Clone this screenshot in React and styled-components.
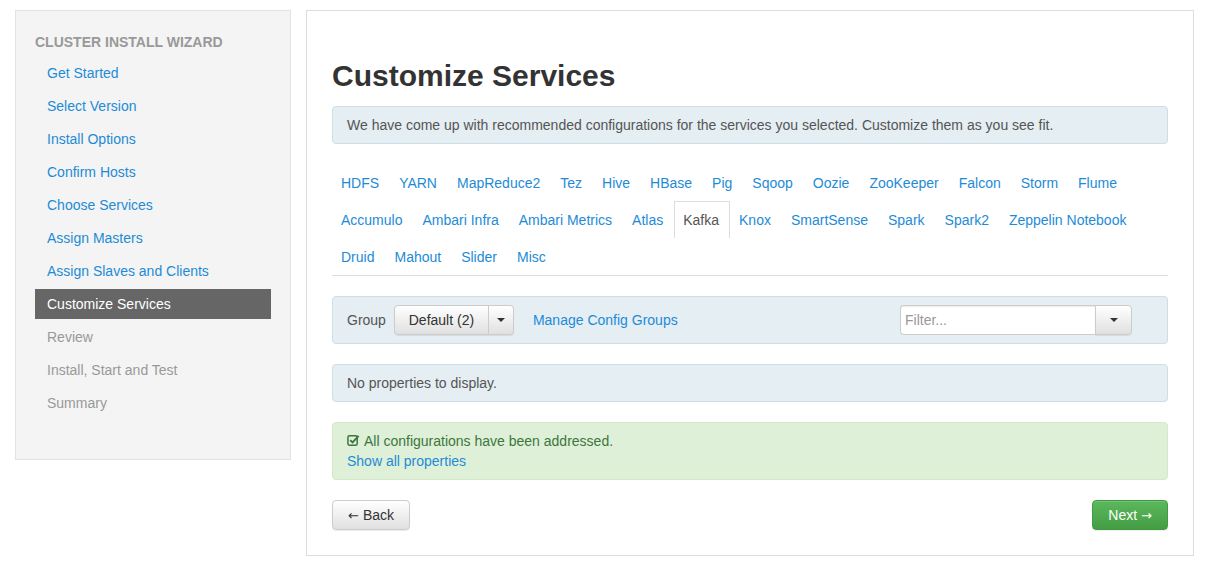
import React from 'react'
import styled, { createGlobalStyle, css } from 'styled-components'

const GlobalStyle = createGlobalStyle`
	body {
		margin: 0;
		background: #fff;
		font-family: 'Liberation Sans', Arial, sans-serif;
		font-size: 14px;
		color: #333;
	}
	* {
		box-sizing: border-box;
	}
`

const LINK = '#1e8bd6'

const Page = styled.div`
	display: grid;
	grid-template-columns: 276px 888px;
	column-gap: 15px;
	align-items: start;
	padding: 10px 0 0 15px;
`

const Sidebar = styled.div`
	background: #f4f4f4;
	border: 1px solid #e3e3e3;
	padding: 21px 19px 38px 19px;
`

const SidebarTitle = styled.div`
	font-size: 14px;
	font-weight: bold;
	color: #999;
	line-height: 20px;
	text-transform: uppercase;
	margin-bottom: 6px;
`

const NavItem = styled.div`
	padding: 5px 12px;
	line-height: 20px;
	margin-bottom: 3px;
	color: ${LINK};
	${(p) =>
		p.$active &&
		css`
			background: #666;
			color: #fff;
		`}
	${(p) =>
		p.$disabled &&
		css`
			color: #999;
		`}
`

const Main = styled.div`
	border: 1px solid #ddd;
	padding: 48px 25px 25px 25px;
`

const Heading = styled.h2`
	font-size: 30px;
	font-weight: bold;
	line-height: 33px;
	margin: 0 0 14px 0;
	color: #333;
`

const Box = styled.div`
	background: ${(p) => (p.$success ? '#dff0d8' : '#e4eef3')};
	border: 1px solid ${(p) => (p.$success ? '#d6e9c6' : '#cfdde6')};
	border-radius: 4px;
	color: ${(p) => (p.$success ? '#3c763d' : '#555')};
	padding: 8px 14px;
	line-height: 20px;
	margin-bottom: 20px;
`

const Tabs = styled.div`
	display: flex;
	flex-wrap: wrap;
	border-bottom: 1px solid #ddd;
	margin-top: 20px;
	margin-bottom: 20px;
`

const Tab = styled.div`
	padding: 8px 10px 8px 8px;
	line-height: 20px;
	border: 1px solid transparent;
	border-bottom: none;
	color: ${LINK};
	${(p) =>
		p.$active &&
		css`
			border-color: #ddd;
			background: #fff;
			color: #555;
		`}
`

const RowBreak = styled.div`
	flex-basis: 100%;
`

const GroupBar = styled.div`
	display: flex;
	align-items: center;
	background: #e4eef3;
	border: 1px solid #cfdde6;
	border-radius: 4px;
	padding: 8px 35px 8px 14px;
	margin-bottom: 20px;
	color: #555;
`

const GroupLabel = styled.span`
	margin-right: 8px;
`

const BtnGroup = styled.div`
	display: flex;
	height: 30px;
`

const gradBtn = css`
	background: linear-gradient(to bottom, #fff 0%, #e0e0e0 100%);
	border: 1px solid #ccc;
	color: #333;
	font-family: inherit;
	font-size: 14px;
	display: flex;
	align-items: center;
	justify-content: center;
	box-shadow: inset 0 1px 0 rgba(255, 255, 255, 0.15), 0 1px 1px rgba(0, 0, 0, 0.075);
`

const SplitMain = styled.div`
	${gradBtn};
	width: 95px;
	border-radius: 4px 0 0 4px;
`

const Caret = styled.div`
	${gradBtn};
	width: ${(p) => p.$w || 25}px;
	border-radius: 0 4px 4px 0;
	border-left: ${(p) => (p.$noLeft ? 'none' : '1px solid #ccc')};
	&::after {
		content: '';
		border-left: 4px solid transparent;
		border-right: 4px solid transparent;
		border-top: 4px solid #333;
	}
`

const GroupLink = styled.span`
	color: ${LINK};
	margin-left: 19px;
`

const Spacer = styled.div`
	flex: 1;
`

const FilterInput = styled.div`
	width: 195px;
	height: 30px;
	border: 1px solid #ccc;
	border-right: none;
	border-radius: 4px 0 0 4px;
	background: #fff;
	color: #999;
	padding: 0 4px;
	display: flex;
	align-items: center;
	box-shadow: inset 0 1px 1px rgba(0, 0, 0, 0.075);
`

const Link = styled.div`
	color: ${LINK};
`

const Footer = styled.div`
	display: flex;
	justify-content: space-between;
`

const Button = styled.div`
	${gradBtn};
	height: 30px;
	padding: 0 15px;
	border-radius: 4px;
	${(p) =>
		p.$green &&
		css`
			background: linear-gradient(to bottom, #5cb85c 0%, #449d44 100%);
			border-color: #409a40;
			color: #fff;
		`}
`

const Arrow = styled.span`
	font-family: 'DejaVu Sans', sans-serif;
	font-size: 13px;
	margin: ${(p) => (p.$right ? '0 0 0 4px' : '0 4px 0 0')};
`

const CheckIcon = () => (
	<svg width='13' height='13' viewBox='0 0 14 14' style={{ marginRight: 4, verticalAlign: '-1px' }}>
		<rect x='1' y='2' width='10' height='10' rx='1.5' fill='none' stroke='#3c763d' strokeWidth='1.6' />
		<path d='M3.5 6.5 L6 9 L12.5 2' fill='none' stroke='#3c763d' strokeWidth='2' />
	</svg>
)

const steps = [
	'Get Started',
	'Select Version',
	'Install Options',
	'Confirm Hosts',
	'Choose Services',
	'Assign Masters',
	'Assign Slaves and Clients',
	'Customize Services',
	'Review',
	'Install, Start and Test',
	'Summary',
]

const services = [
	'HDFS', 'YARN', 'MapReduce2', 'Tez', 'Hive', 'HBase', 'Pig', 'Sqoop', 'Oozie', 'ZooKeeper',
	'Falcon', 'Storm', 'Flume', 'Accumulo', 'Ambari Infra', 'Ambari Metrics', 'Atlas', 'Kafka',
	'Knox', 'SmartSense', 'Spark', 'Spark2', 'Zeppelin Notebook', 'Druid', 'Mahout', 'Slider', 'Misc',
]

const rowBreaks = { Accumulo: true, Druid: true }

const App = () => {
	const current = 7
	return (
		<>
			<GlobalStyle />
			<Page>
				<Sidebar>
					<SidebarTitle>Cluster Install Wizard</SidebarTitle>
					{steps.map((s, i) => (
						<NavItem key={s} $active={i === current} $disabled={i > current}>
							{s}
						</NavItem>
					))}
				</Sidebar>
				<Main>
					<Heading>Customize Services</Heading>
					<Box>
						We have come up with recommended configurations for the services you selected. Customize them as you see fit.
					</Box>
					<Tabs>
						{services.map((s) => (
							<React.Fragment key={s}>
								{rowBreaks[s] && <RowBreak />}
								<Tab $active={s === 'Kafka'}>{s}</Tab>
							</React.Fragment>
						))}
					</Tabs>
					<GroupBar>
						<GroupLabel>Group</GroupLabel>
						<BtnGroup>
							<SplitMain>Default (2)</SplitMain>
							<Caret $noLeft />
						</BtnGroup>
						<GroupLink>Manage Config Groups</GroupLink>
						<Spacer />
						<BtnGroup>
							<FilterInput>Filter...</FilterInput>
							<Caret $w={37} />
						</BtnGroup>
					</GroupBar>
					<Box>No properties to display.</Box>
					<Box $success>
						<div>
							<CheckIcon />
							All configurations have been addressed.
						</div>
						<Link>Show all properties</Link>
					</Box>
					<Footer>
						<Button>
							<Arrow>←</Arrow>Back
						</Button>
						<Button $green>
							Next<Arrow $right>→</Arrow>
						</Button>
					</Footer>
				</Main>
			</Page>
		</>
	)
}

export default App
